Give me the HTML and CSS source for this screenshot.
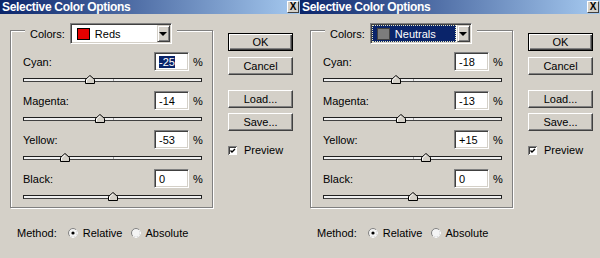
FILE: index.html
```html
<!DOCTYPE html>
<html lang="en">
<head>
    <meta charset="UTF-8">
    <title>Selective Color Options</title>
    <link rel="stylesheet" href="styles.css">
</head>
<body>
<div class="screen">

    <!-- Dialog 1: Reds -->
    <div class="dialog">
        <div class="titlebar">
            <span class="title">Selective Color Options</span>
            <span class="close">X</span>
        </div>
        <div class="body">
            <div class="group">
                <div class="legend">
                    <span>Colors:</span>
                    <div class="select">
                        <div class="pick">
                            <span class="swatch red"></span>
                            <span>Reds</span>
                        </div>
                        <span class="arrow"><i></i></span>
                    </div>
                </div>

                <div class="channel">
                    <div class="row">
                        <label>Cyan:</label>
                        <span class="field"><span class="sel">-25</span></span>
                        <span class="pct">%</span>
                    </div>
                    <div class="slider">
                        <div class="track"></div>
                        <span class="thumb" style="left: 37.5%"><svg width="10" height="9" viewBox="0 0 10 9"><polygon points="0.5,8.5 0.5,4.5 5,0.5 9.5,4.5 9.5,8.5" fill="#d4d0c8" stroke="#000"/><polyline points="1.5,7.5 1.5,5 5,1.8" fill="none" stroke="#fff"/></svg></span>
                    </div>
                </div>
                <div class="channel">
                    <div class="row">
                        <label>Magenta:</label>
                        <span class="field">-14</span>
                        <span class="pct">%</span>
                    </div>
                    <div class="slider">
                        <div class="track"></div>
                        <span class="thumb" style="left: 43%"><svg width="10" height="9" viewBox="0 0 10 9"><polygon points="0.5,8.5 0.5,4.5 5,0.5 9.5,4.5 9.5,8.5" fill="#d4d0c8" stroke="#000"/><polyline points="1.5,7.5 1.5,5 5,1.8" fill="none" stroke="#fff"/></svg></span>
                    </div>
                </div>
                <div class="channel">
                    <div class="row">
                        <label>Yellow:</label>
                        <span class="field">-53</span>
                        <span class="pct">%</span>
                    </div>
                    <div class="slider">
                        <div class="track"></div>
                        <span class="thumb" style="left: 23.5%"><svg width="10" height="9" viewBox="0 0 10 9"><polygon points="0.5,8.5 0.5,4.5 5,0.5 9.5,4.5 9.5,8.5" fill="#d4d0c8" stroke="#000"/><polyline points="1.5,7.5 1.5,5 5,1.8" fill="none" stroke="#fff"/></svg></span>
                    </div>
                </div>
                <div class="channel">
                    <div class="row">
                        <label>Black:</label>
                        <span class="field">0</span>
                        <span class="pct">%</span>
                    </div>
                    <div class="slider">
                        <div class="track"></div>
                        <span class="thumb" style="left: 50%"><svg width="10" height="9" viewBox="0 0 10 9"><polygon points="0.5,8.5 0.5,4.5 5,0.5 9.5,4.5 9.5,8.5" fill="#d4d0c8" stroke="#000"/><polyline points="1.5,7.5 1.5,5 5,1.8" fill="none" stroke="#fff"/></svg></span>
                    </div>
                </div>
            </div>

            <div class="side">
                <span class="btn default">OK</span>
                <span class="btn cancel">Cancel</span>
                <span class="btn load">Load...</span>
                <span class="btn save">Save...</span>
                <div class="check">
                    <svg width="9" height="9" viewBox="0 0 9 9"><rect x="0" y="0" width="9" height="9" fill="#808080"/><rect x="1" y="1" width="8" height="8" fill="#fff"/><rect x="1" y="1" width="7" height="7" fill="#404040"/><rect x="2" y="2" width="6" height="6" fill="#fff"/><path d="M2.5 4.5 L4 6 L7 3" fill="none" stroke="#000" stroke-width="1.4"/></svg>
                    <span>Preview</span>
                </div>
            </div>
        </div>
        <div class="method">
            <span>Method:</span>
            <span class="radio"><svg width="10" height="10" viewBox="0 0 10 10"><circle cx="5" cy="5" r="4.5" fill="#f4f4f4" stroke="#808080"/><path d="M8.2 1.8 A4.5 4.5 0 0 1 1.8 8.2" fill="none" stroke="#fff"/><circle cx="5" cy="5" r="1.6" fill="#000"/></svg></span>
            <span>Relative</span>
            <span class="radio second"><svg width="10" height="10" viewBox="0 0 10 10"><circle cx="5" cy="5" r="4.5" fill="#f4f4f4" stroke="#808080"/><path d="M8.2 1.8 A4.5 4.5 0 0 1 1.8 8.2" fill="none" stroke="#fff"/></svg></span>
            <span>Absolute</span>
        </div>
    </div>

    <!-- Dialog 2: Neutrals -->
    <div class="dialog">
        <div class="titlebar">
            <span class="title">Selective Color Options</span>
            <span class="close">X</span>
        </div>
        <div class="body">
            <div class="group">
                <div class="legend">
                    <span>Colors:</span>
                    <div class="select">
                        <div class="pick focus">
                            <span class="swatch gray"></span>
                            <span>Neutrals</span>
                        </div>
                        <span class="arrow"><i></i></span>
                    </div>
                </div>

                <div class="channel">
                    <div class="row">
                        <label>Cyan:</label>
                        <span class="field">-18</span>
                        <span class="pct">%</span>
                    </div>
                    <div class="slider">
                        <div class="track"></div>
                        <span class="thumb" style="left: 41%"><svg width="10" height="9" viewBox="0 0 10 9"><polygon points="0.5,8.5 0.5,4.5 5,0.5 9.5,4.5 9.5,8.5" fill="#d4d0c8" stroke="#000"/><polyline points="1.5,7.5 1.5,5 5,1.8" fill="none" stroke="#fff"/></svg></span>
                    </div>
                </div>
                <div class="channel">
                    <div class="row">
                        <label>Magenta:</label>
                        <span class="field">-13</span>
                        <span class="pct">%</span>
                    </div>
                    <div class="slider">
                        <div class="track"></div>
                        <span class="thumb" style="left: 43.5%"><svg width="10" height="9" viewBox="0 0 10 9"><polygon points="0.5,8.5 0.5,4.5 5,0.5 9.5,4.5 9.5,8.5" fill="#d4d0c8" stroke="#000"/><polyline points="1.5,7.5 1.5,5 5,1.8" fill="none" stroke="#fff"/></svg></span>
                    </div>
                </div>
                <div class="channel">
                    <div class="row">
                        <label>Yellow:</label>
                        <span class="field">+15</span>
                        <span class="pct">%</span>
                    </div>
                    <div class="slider">
                        <div class="track"></div>
                        <span class="thumb" style="left: 57.5%"><svg width="10" height="9" viewBox="0 0 10 9"><polygon points="0.5,8.5 0.5,4.5 5,0.5 9.5,4.5 9.5,8.5" fill="#d4d0c8" stroke="#000"/><polyline points="1.5,7.5 1.5,5 5,1.8" fill="none" stroke="#fff"/></svg></span>
                    </div>
                </div>
                <div class="channel">
                    <div class="row">
                        <label>Black:</label>
                        <span class="field">0</span>
                        <span class="pct">%</span>
                    </div>
                    <div class="slider">
                        <div class="track"></div>
                        <span class="thumb" style="left: 50%"><svg width="10" height="9" viewBox="0 0 10 9"><polygon points="0.5,8.5 0.5,4.5 5,0.5 9.5,4.5 9.5,8.5" fill="#d4d0c8" stroke="#000"/><polyline points="1.5,7.5 1.5,5 5,1.8" fill="none" stroke="#fff"/></svg></span>
                    </div>
                </div>
            </div>

            <div class="side">
                <span class="btn default">OK</span>
                <span class="btn cancel">Cancel</span>
                <span class="btn load">Load...</span>
                <span class="btn save">Save...</span>
                <div class="check">
                    <svg width="9" height="9" viewBox="0 0 9 9"><rect x="0" y="0" width="9" height="9" fill="#808080"/><rect x="1" y="1" width="8" height="8" fill="#fff"/><rect x="1" y="1" width="7" height="7" fill="#404040"/><rect x="2" y="2" width="6" height="6" fill="#fff"/><path d="M2.5 4.5 L4 6 L7 3" fill="none" stroke="#000" stroke-width="1.4"/></svg>
                    <span>Preview</span>
                </div>
            </div>
        </div>
        <div class="method">
            <span>Method:</span>
            <span class="radio"><svg width="10" height="10" viewBox="0 0 10 10"><circle cx="5" cy="5" r="4.5" fill="#f4f4f4" stroke="#808080"/><path d="M8.2 1.8 A4.5 4.5 0 0 1 1.8 8.2" fill="none" stroke="#fff"/><circle cx="5" cy="5" r="1.6" fill="#000"/></svg></span>
            <span>Relative</span>
            <span class="radio second"><svg width="10" height="10" viewBox="0 0 10 10"><circle cx="5" cy="5" r="4.5" fill="#f4f4f4" stroke="#808080"/><path d="M8.2 1.8 A4.5 4.5 0 0 1 1.8 8.2" fill="none" stroke="#fff"/></svg></span>
            <span>Absolute</span>
        </div>
    </div>

</div>
</body>
</html>
```

FILE: styles.css
```css
body {
    margin: 0;
    background-color: #d4d0c8;
    font-family: "Liberation Sans", Arial, sans-serif;
    font-size: 11px;
    color: #000;
}
.screen {
    display: flex;
}
.dialog {
    width: 300px;
    height: 258px;
}
.titlebar {
    height: 14px;
    background: linear-gradient(to right, #0a246a, #a6caf0);
    display: flex;
    align-items: center;
    justify-content: space-between;
}
.title {
    color: #fff;
    font-weight: bold;
    font-size: 12px;
    line-height: 14px;
    padding-left: 2px;
    letter-spacing: -0.3px;
}
.close {
    width: 12px;
    height: 12px;
    margin-right: 1px;
    box-sizing: border-box;
    background-color: #d4d0c8;
    border: 1px solid;
    border-color: #fff #404040 #404040 #fff;
    font-weight: bold;
    font-size: 10px;
    line-height: 10px;
    text-align: center;
}
.body {
    display: flex;
    align-items: flex-start;
    padding: 16px 0 0 10px;
}

/* group box */
.group {
    width: 203px;
    box-sizing: border-box;
    border: 1px solid #808080;
    box-shadow: inset 1px 1px 0 #fff, 1px 1px 0 #fff;
    padding: 0 10px 0 12px;
}
.legend {
    display: flex;
    align-items: center;
    gap: 5px;
    width: max-content;
    height: 21px;
    margin: -8px 0 0 2px;
    padding: 0 5px;
    background-color: #d4d0c8;
}
.select {
    width: 102px;
    height: 21px;
    box-sizing: border-box;
    display: flex;
    padding: 1px;
    background-color: #fff;
    border: 1px solid;
    border-color: #808080 #fff #fff #808080;
    box-shadow: inset 1px 1px 0 #404040, inset -1px -1px 0 #d4d0c8;
}
.pick {
    flex: 1;
    display: flex;
    align-items: center;
    margin-right: 1px;
    padding-left: 4px;
    border: 1px dotted transparent;
}
.pick.focus {
    background-color: #0a246a;
    color: #fff;
    border-color: #e8e8c0;
}
.swatch {
    width: 13px;
    height: 12px;
    box-sizing: border-box;
    border: 1px solid #000;
    margin-right: 5px;
}
.swatch.red {
    background-color: #e60000;
}
.swatch.gray {
    background-color: #7c7c7c;
    border-color: #404040;
}
.arrow {
    width: 13px;
    box-sizing: border-box;
    display: flex;
    align-items: center;
    justify-content: center;
    background-color: #d4d0c8;
    border: 1px solid;
    border-color: #d4d0c8 #404040 #404040 #d4d0c8;
    box-shadow: inset 1px 1px 0 #fff, inset -1px -1px 0 #808080;
}
.arrow i {
    border-top: 4px solid #000;
    border-left: 4px solid transparent;
    border-right: 4px solid transparent;
}

/* channel rows */
.legend + .channel {
    margin-top: 8px;
}
.row {
    display: flex;
    align-items: center;
    height: 19px;
}
.row label {
    flex: 1;
}
.field {
    width: 35px;
    height: 19px;
    box-sizing: border-box;
    display: flex;
    align-items: center;
    padding-left: 4px;
    background-color: #fff;
    border: 1px solid;
    border-color: #808080 #fff #fff #808080;
    box-shadow: inset 1px 1px 0 #404040, inset -1px -1px 0 #d4d0c8;
}
.sel {
    background-color: #0a246a;
    color: #fff;
}
.pct {
    width: 9px;
    margin-left: 4px;
}
.slider {
    position: relative;
    height: 20px;
    box-sizing: border-box;
    padding-top: 7px;
}
.channel:last-child .slider {
    height: 19px;
}
.track {
    position: relative;
    height: 4px;
    box-sizing: border-box;
    background-color: #f0f0f0;
    border: 1px solid #202020;
    border-bottom-color: #404040;
}
.track::after {
    content: "";
    position: absolute;
    left: 50%;
    top: 0;
    width: 1px;
    height: 2px;
    background-color: #a0a0a0;
}
.thumb {
    position: absolute;
    top: 4px;
    margin-left: -5px;
    width: 10px;
    height: 9px;
    display: flex;
}

/* buttons */
.side {
    width: 65px;
    margin-left: 15px;
    padding-top: 3px;
    display: flex;
    flex-direction: column;
}
.btn {
    height: 18px;
    box-sizing: border-box;
    display: flex;
    align-items: center;
    justify-content: center;
    border: 1px solid;
    border-color: #fff #404040 #404040 #fff;
    box-shadow: inset -1px -1px 0 #808080;
}
.btn.default {
    border-color: #000;
    box-shadow: inset 1px 1px 0 #fff, inset -1px -1px 0 #404040, inset -2px -2px 0 #808080;
}
.btn.cancel {
    margin-top: 6px;
}
.btn.load {
    margin-top: 15px;
}
.btn.save {
    margin-top: 5px;
}
.check {
    display: flex;
    align-items: center;
    gap: 7px;
    margin-top: 13px;
}

/* method row */
.method {
    display: flex;
    align-items: center;
    height: 14px;
    margin: 18px 0 0 17px;
}
.radio {
    display: flex;
    margin: 0 5px 0 11px;
}
.radio.second {
    margin-left: 8px;
}
```
